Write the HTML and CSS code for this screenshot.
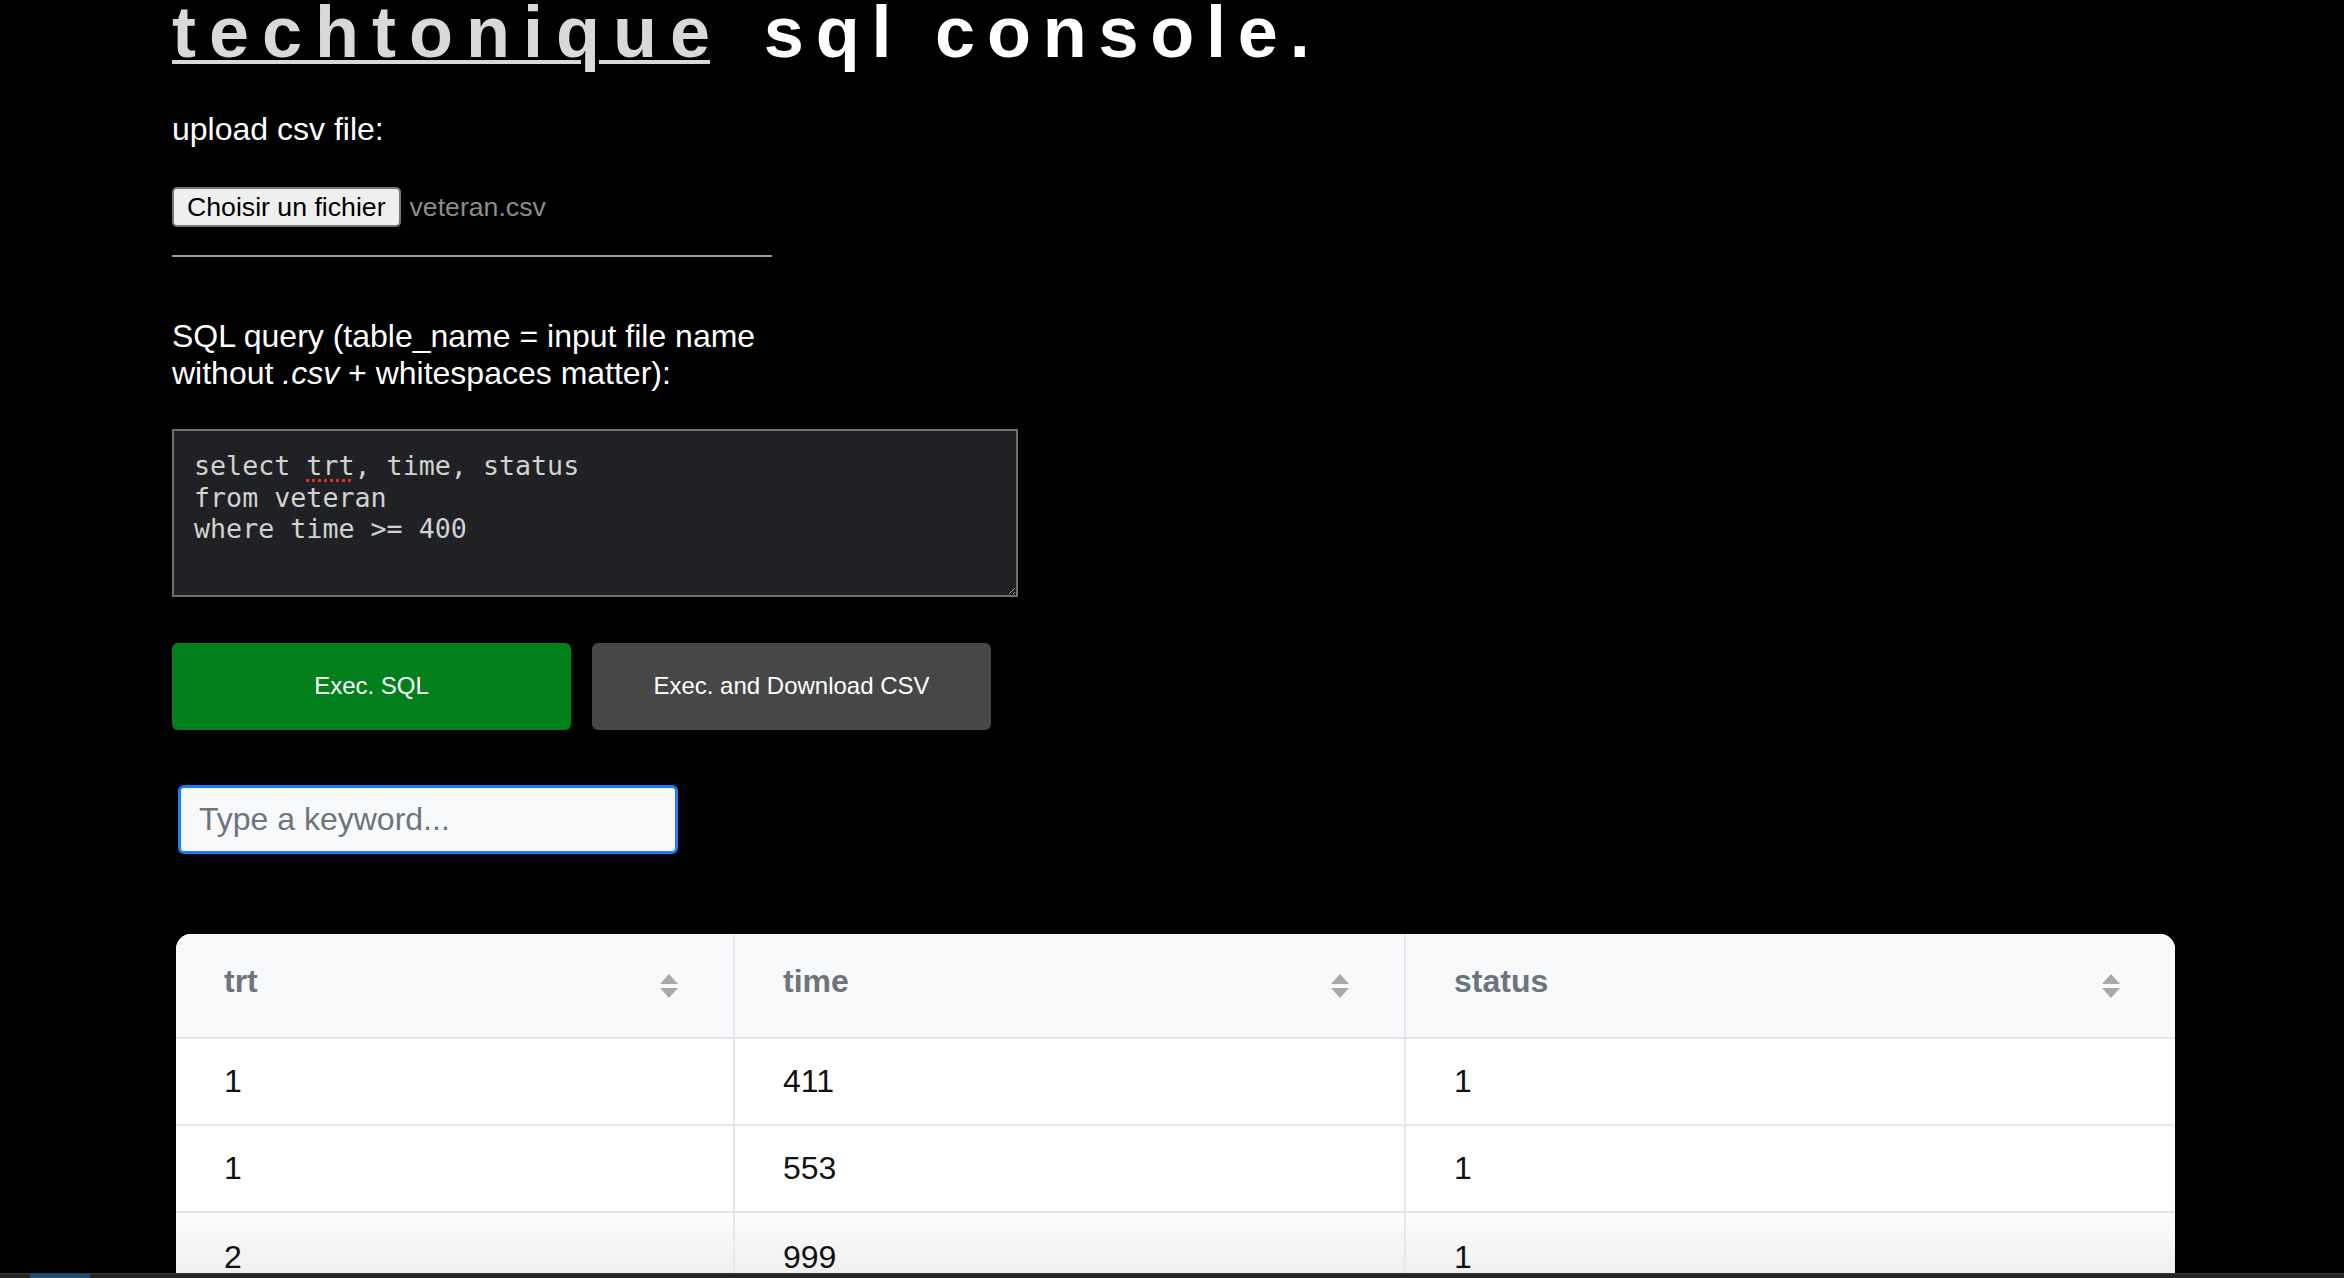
FILE: index.html
```html
<!DOCTYPE html>
<html lang="fr">
<head>
<meta charset="utf-8">
<title>techtonique sql console.</title>
<link rel="stylesheet" href="styles.css">
</head>
<body>
<main class="page">
  <h1 class="title"><a class="brand" href="#">techtoniqu<span class="brand-last">e</span></a><span class="rest"> sql console.</span></h1>

  <p class="label">upload csv file:</p>
  <div class="file-row">
    <span class="file-btn">Choisir un fichier</span>
    <span class="file-name">veteran.csv</span>
  </div>
  <hr class="sep">

  <p class="label query-label">SQL query (table_name = input file name without <em>.csv</em> + whitespaces matter):</p>
  <div class="query" contenteditable="true" spellcheck="false">select <span class="typo">trt</span>, time, status<br>from veteran<br>where time &gt;= 400</div>

  <div class="actions">
    <button class="btn btn-exec" type="button">Exec. SQL</button>
    <button class="btn btn-dl" type="button">Exec. and Download CSV</button>
  </div>

  <input class="search" type="text" placeholder="Type a keyword...">

  <div class="table-wrap">
    <table class="results">
      <colgroup>
        <col class="c1"><col class="c2"><col class="c3">
      </colgroup>
      <thead>
        <tr>
          <th><div class="th-in"><span>trt</span><svg class="sort" viewBox="0 0 18 28" width="18" height="28"><path d="M0 12 L9 2 L18 12 Z M0 16 L9 26 L18 16 Z"/></svg></div></th>
          <th><div class="th-in"><span>time</span><svg class="sort" viewBox="0 0 18 28" width="18" height="28"><path d="M0 12 L9 2 L18 12 Z M0 16 L9 26 L18 16 Z"/></svg></div></th>
          <th><div class="th-in"><span>status</span><svg class="sort" viewBox="0 0 18 28" width="18" height="28"><path d="M0 12 L9 2 L18 12 Z M0 16 L9 26 L18 16 Z"/></svg></div></th>
        </tr>
      </thead>
      <tbody>
        <tr><td>1</td><td>411</td><td>1</td></tr>
        <tr><td>1</td><td>553</td><td>1</td></tr>
        <tr class="fade"><td>2</td><td>999</td><td>1</td></tr>
      </tbody>
    </table>
  </div>
</main>
<div class="taskbar"><span class="tb-icon"></span></div>
</body>
</html>
```
FILE: styles.css
```css
* { box-sizing: border-box; }

html, body {
  margin: 0;
  padding: 0;
  background: #000;
  overflow: hidden;
}

body {
  font-family: "Liberation Sans", Arial, sans-serif;
  color: #fff;
  height: 1278px;
}

.page {
  padding-left: 172px;
}

.title {
  margin: -4px 0 0;
  font-size: 72px;
  line-height: 72px;
  font-weight: bold;
  letter-spacing: 13px;
  color: #fff;
  white-space: nowrap;
}

.brand {
  color: #d9d9d9;
  text-decoration: underline;
  text-decoration-thickness: 4px;
  text-underline-offset: 3px;
}

.brand-last {
  letter-spacing: 0;
  margin-right: 22px;
}

.rest {
  letter-spacing: 11.8px;
}

.label {
  margin: 43px 0 0;
  font-size: 32px;
  line-height: 36px;
  color: #fff;
}

.file-row {
  margin-top: 40px;
  height: 40px;
  display: flex;
  align-items: center;
  gap: 9px;
  font-size: 26.67px;
}

.file-btn {
  height: 40px;
  padding: 0 13px;
  display: flex;
  align-items: center;
  background: #efefef;
  color: #000;
  border: 2px solid #767676;
  border-radius: 5px;
}

.file-name {
  color: #8c8c8c;
}

.sep {
  margin: 28px 0 0;
  width: 600px;
  height: 2px;
  border: 0;
  background: #9a9a9a;
}

.query-label {
  margin-top: 61px;
  width: 600px;
  line-height: 37px;
}

.query {
  margin-top: 37px;
  width: 846px;
  height: 168px;
  padding: 19px 20px;
  background: #202124;
  border: 2px solid #6e6e6e;
  color: #d2d2d2;
  font-family: "DejaVu Sans Mono", "Liberation Mono", monospace;
  font-size: 26.67px;
  line-height: 31.5px;
  white-space: pre;
  overflow: auto;
  resize: both;
  color-scheme: dark;
  outline: none;
}

.typo {
  text-decoration: underline dotted #e0302a;
  text-decoration-thickness: 3px;
  text-underline-offset: 4px;
}

.actions {
  margin-top: 46px;
  display: flex;
  gap: 21px;
}

.btn {
  width: 399px;
  height: 87px;
  border: 0;
  border-radius: 6px;
  color: #fff;
  font-family: "Liberation Sans", Arial, sans-serif;
  font-size: 24px;
  padding-bottom: 2px;
}

.btn-exec { background: #03801c; }
.btn-dl { background: #474747; }

.search {
  display: block;
  margin: 55px 0 0 6px;
  width: 500px;
  height: 69px;
  padding: 0 18px;
  background: #f8f9fa;
  border: 3px solid #1a7cf6;
  border-radius: 6px;
  font-family: "Liberation Sans", Arial, sans-serif;
  font-size: 32px;
  color: #212529;
  outline: none;
}

.search::placeholder {
  color: #6c757d;
}

.table-wrap {
  margin: 80px 0 0 4px;
  width: 1999px;
  border-radius: 15px 15px 0 0;
  overflow: hidden;
  background: #fff;
}

.results {
  width: 1999px;
  table-layout: fixed;
  border-collapse: separate;
  border-spacing: 0;
  font-size: 32px;
}

.c1 { width: 557px; }
.c2 { width: 671px; }
.c3 { width: 771px; }

.results th,
.results td {
  padding: 0 55px 0 48px;
  border-bottom: 2px solid #e4e5e9;
  text-align: left;
  vertical-align: middle;
}

.results th + th,
.results td + td {
  border-left: 2px solid #e6e7ea;
}

.results th {
  height: 105px;
  padding-bottom: 8px;
  background: #f8f9fa;
  color: #6c757d;
  font-weight: bold;
}

.th-in {
  display: flex;
  align-items: center;
  justify-content: space-between;
}

.sort {
  fill: #a9a9a9;
  margin-top: 8px;
}

.results td {
  height: 87px;
  color: #111;
  background: #fff;
}

.results .fade td {
  background: linear-gradient(#fdfdfd, #e9e9e9);
  padding-top: 4px;
}

.taskbar {
  position: fixed;
  left: 0;
  right: 0;
  bottom: 0;
  height: 5px;
  background: #252525;
  border-top: 1px solid #3a3a3a;
}

.tb-icon {
  position: absolute;
  left: 30px;
  top: 0;
  width: 60px;
  height: 5px;
  background: #1e4e78;
}
```
